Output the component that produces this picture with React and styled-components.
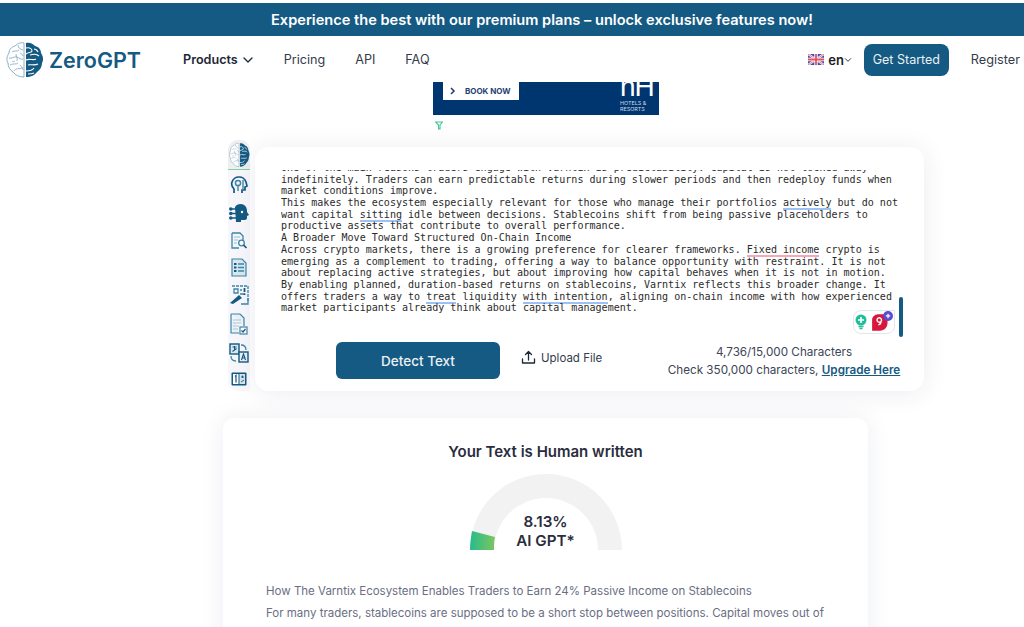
import React from 'react'
import styled, { createGlobalStyle } from 'styled-components'

const Global = createGlobalStyle`
  html, body {
    margin: 0;
    padding: 0;
    height: 627px;
    overflow: hidden;
    background: #fff;
    font-family: Inter, "Liberation Sans", sans-serif;
  }
  * { box-sizing: border-box; }
`

const Page = styled.div`
  width: 1024px;
  height: 627px;
  overflow: hidden;
  background: #fff;
  padding-top: 3px;
`

const Banner = styled.div`
  height: 33px;
  padding-left: 60px;
  background: #155a82;
  color: #fff;
  font-size: 14.6px;
  font-weight: 600;
  display: flex;
  align-items: center;
  justify-content: center;
`

const Header = styled.header`
  height: 45px;
  margin-top: 1px;
  display: flex;
  align-items: center;
  padding: 0 4px 0 6px;
`

const LogoText = styled.span`
  font-size: 21.5px;
  font-weight: 600;
  color: #155a82;
  margin-left: 5px;
`

const Nav = styled.nav`
  display: flex;
  align-items: center;
  margin-left: 42px;
  flex: 1;
`

const NavItem = styled.a`
  display: flex;
  align-items: center;
  gap: 4px;
  font-size: 12.6px;
  font-weight: ${p => (p.$bold ? 600 : 400)};
  color: ${p => (p.$bold ? '#1d2738' : '#333b4a')};
  margin-right: ${p => p.$gap}px;
`

const Lang = styled.div`
  display: flex;
  align-items: center;
  font-size: 13px;
  font-weight: 600;
  color: #1c1c24;
  gap: 4px;
`

const GetStarted = styled.button`
  width: 85px;
  height: 32px;
  margin-left: 12px;
  border: 0;
  border-radius: 8px;
  background: #155a82;
  color: #e9f1f5;
  font: 400 12.5px Inter, sans-serif;
`

const Register = styled.a`
  margin-left: 22px;
  font-size: 12.7px;
  color: #333b4a;
`

const Ad = styled.div`
  width: 226px;
  height: 33px;
  margin-left: 433px;
  background: #003670;
  display: flex;
  justify-content: space-between;
  overflow: hidden;
`

const BookNow = styled.div`
  width: 76px;
  height: 18px;
  margin-left: 10px;
  background: #fff;
  color: #1f3f75;
  font-size: 8px;
  font-weight: 700;
  display: flex;
  align-items: center;
  gap: 9px;
  padding-left: 7px;
`

const Brand = styled.div`
  width: 39px;
  color: #fff;
  display: flex;
  flex-direction: column;
`

const BrandMark = styled.div`
  height: 20px;
  margin-top: -5px;
  font: 400 28px/20px "Liberation Sans", sans-serif;
  letter-spacing: -1px;
`

const BrandSub = styled.div`
  margin-top: 3px;
  font-size: 5.4px;
  line-height: 6px;
  color: #cfd9e6;
`

const AdMark = styled.div`
  height: 32px;
  margin-left: 435px;
  padding-top: 6px;
  display: flex;
  align-items: flex-start;
`

const ToolRow = styled.section`
  display: flex;
  align-items: flex-start;
  margin-left: 228px;
  width: 696px;
`

const Side = styled.aside`
  width: 22px;
  height: 251px;
  margin-top: -7px;
  margin-right: 5px;
  background: #f7f7fb;
  border-radius: 10px 10px 0 10px;
  display: flex;
  flex-direction: column;
  align-items: center;
`

const SideItem = styled.div`
  flex: none;
  width: 22px;
  height: ${p => p.$h}px;
  display: flex;
  align-items: center;
  justify-content: center;
  ${p => p.$active && 'background: #efeff2; border-radius: 10px 10px 0 0; border-bottom: 1px solid #7fd49a;'}
`

const Card = styled.div`
  position: relative;
  width: 669px;
  height: 244px;
  background: #fff;
  border-radius: 14px;
  box-shadow: 0 2px 26px rgba(30, 40, 90, 0.09);
  padding: 23px 0 0 26px;
`

const TextBox = styled.div`
  height: 146px;
  overflow: hidden;
`

const Pre = styled.div`
  margin-top: -8px;
  font: 400 10.05px/11.69px "DejaVu Sans Mono", "Liberation Mono", monospace;
  color: #2b2b2b;
  white-space: pre;
`

const Flag = styled.span`
  border-bottom: 2px solid ${p => (p.$red ? '#f7a6b6' : '#9dc0f7')};
`

const ScrollThumb = styled.div`
  position: absolute;
  left: 644px;
  top: 150px;
  width: 4px;
  height: 40px;
  border-radius: 2px;
  background: #155a82;
`

const Widget = styled.div`
  position: absolute;
  left: 598px;
  top: 163px;
  width: 42px;
  height: 24px;
  background: #fff;
  border: 1px solid #e4e6ec;
  border-radius: 8px 0 8px 8px;
  display: flex;
  align-items: center;
  justify-content: center;
  gap: 4px;
`

const CardFoot = styled.div`
  display: flex;
  align-items: flex-start;
  margin-top: 26px;
  padding: 0 20px 0 55px;
`

const Detect = styled.button`
  width: 164px;
  height: 37px;
  border: 0;
  border-radius: 6px;
  background: #155a82;
  color: #e9f1f5;
  font: 500 13.5px Inter, sans-serif;
`

const Upload = styled.a`
  display: flex;
  align-items: center;
  gap: 5px;
  margin-left: 21px;
  margin-top: 8px;
  font-size: 11.5px;
  color: #333b4a;
`

const Counts = styled.div`
  width: 240px;
  margin: 1px 0 0 auto;
  text-align: center;
  font-size: 11.7px;
  line-height: 18px;
  color: #3d4556;
  white-space: nowrap;
`

const Upgrade = styled.a`
  color: #155a82;
  font-weight: 600;
  text-decoration: underline;
`

const Result = styled.section`
  width: 645px;
  height: 300px;
  margin: 27px 0 0 223px;
  background: #fff;
  border-radius: 12px;
  box-shadow: 0 0 24px rgba(30, 40, 90, 0.08);
  padding-top: 25px;
`

const ResultTitle = styled.h2`
  margin: 0;
  text-align: center;
  font-size: 15px;
  line-height: 18px;
  font-weight: 600;
  color: #2a2d3e;
`

const Gauge = styled.div`
  position: relative;
  width: 152px;
  height: 76px;
  margin: 13px auto 0;
`

const GaugeText = styled.div`
  position: absolute;
  left: 0;
  right: 0;
  top: 38px;
  text-align: center;
  font-size: 15.2px;
  line-height: 19px;
  font-weight: 600;
  color: #2a2d3e;
`

const Body = styled.div`
  margin: 30px 0 0 43px;
  font-size: 11.5px;
  line-height: 22px;
  color: #6a6e84;
`

const BrainIcon = ({ width = 38, height = 38 }) => (
  <svg width={width} height={height} viewBox="0 0 38 38" fill="none" preserveAspectRatio="none">
    <path d="M18 2C14 1 11 3 9 5 5 6 3 9 3 12 1 15 0 19 2 22c0 4 2 7 5 9 2 3 6 5 11 5V2z" fill="#fff" stroke="#8eb0c6" strokeWidth="1" />
    <path d="M6 11c3-2 5 0 7-2M3 17c3 1 5-2 8-1s3 3 6 2M4 24c3-2 6 0 8-2M8 30c2-3 5-2 9-3M12 4c0 3 2 4 5 5M10 13c0 3 2 4 1 7M14 24c1 2 3 2 3 5M14 12c1 1 3 1 3 3M6 20c1 1 2 1 3 0" stroke="#8eb0c6" strokeWidth="0.9" />
    <path d="M20 2c4-1 7 1 9 3 4 1 6 4 6 7 2 3 3 7 1 10 0 4-2 7-5 9-2 3-6 5-11 5V2z" fill="#155a82" />
    <path d="M20 7c4-1 6 1 6 3s-4 1-6 3M24 14c3-1 7-1 9 1M20 19c4-2 7 1 10-1M22 24c3-1 6 1 10-1M20 30c3 0 6 0 8-3M28 8c2 0 3 1 4 3M22 33c2 0 4 0 6-1" stroke="#fff" strokeWidth="1.1" />
  </svg>
)

const Chevron = ({ size = 12, color = '#333' }) => (
  <svg width={size} height={size} viewBox="0 0 12 12" fill="none">
    <path d="M2 4l4 4 4-4" stroke={color} strokeWidth="1.3" strokeLinecap="round" strokeLinejoin="round" />
  </svg>
)

const UkFlag = () => (
  <svg width="16" height="11" viewBox="0 0 16 11">
    <rect width="16" height="11" rx="1.5" fill="#3d50a5" />
    <path d="M0 0l16 11M16 0L0 11" stroke="#fff" strokeWidth="2.2" />
    <path d="M0 0l16 11M16 0L0 11" stroke="#e0506a" strokeWidth="0.8" />
    <path d="M8 0v11M0 5.5h16" stroke="#fff" strokeWidth="3.4" />
    <path d="M8 0v11M0 5.5h16" stroke="#e0506a" strokeWidth="1.8" />
  </svg>
)

const teal = '#3f86a8'

const HeadGear = () => (
  <svg width="18" height="18" viewBox="0 0 18 18" fill="none">
    <path d="M4 17v-4C2 11 1 9 2 6c1-3 4-5 7-5 4 0 6 2 7 5l1 4-2 1v3h-3v3" stroke="#155a82" strokeWidth="1.7" />
    <circle cx="8" cy="7" r="2.6" stroke={teal} strokeWidth="1.5" />
    <path d="M13 4v9M8 10v5" stroke={teal} strokeWidth="1.4" />
  </svg>
)

const HeadSolid = () => (
  <svg width="20" height="20" viewBox="0 0 20 20">
    <path d="M6 4C8 0 15 0 17 4c1 2 1 3 1 5l2 3-2 1v2c0 2-2 2-4 2h-2v2H7z" fill="#155a82" />
    <path d="M1 6h7M1 10.5h7M1 15h7" stroke="#155a82" strokeWidth="1.7" />
    <circle cx="1.8" cy="6" r="1.8" fill="#155a82" />
    <circle cx="1.8" cy="10.5" r="1.8" fill="#155a82" />
    <circle cx="1.8" cy="15" r="1.8" fill="#155a82" />
    <circle cx="13" cy="9" r="1.2" fill="#fff" />
  </svg>
)

const DocSearch = () => (
  <svg width="18" height="18" viewBox="0 0 18 18" fill="none">
    <path d="M2 1h8l3 3v4M2 1v15h7" stroke={teal} strokeWidth="1.3" fill="#f1f6f9" />
    <path d="M4 5h6M4 8h4M4 11h3" stroke="#9cc0d2" strokeWidth="1.2" />
    <circle cx="11.5" cy="11" r="2.8" stroke={teal} strokeWidth="1.3" fill="#fff" />
    <path d="M13.5 13l3 3" stroke="#155a82" strokeWidth="1.7" />
  </svg>
)

const DocList = () => (
  <svg width="16" height="19" viewBox="0 0 16 19" fill="none">
    <path d="M1 1h10l4 4v13H1z" stroke={teal} strokeWidth="1.2" fill="#d9e8ef" />
    <path d="M3 6h2.5M3 9.5h2.5M3 13h2.5" stroke="#155a82" strokeWidth="1.8" />
    <path d="M7 6h6M7 9.5h6M7 13h6" stroke={teal} strokeWidth="1.3" />
  </svg>
)

const GridPencil = () => (
  <svg width="20" height="20" viewBox="0 0 20 20" fill="none">
    <path d="M3 1h16v15" stroke={teal} strokeWidth="1.3" strokeDasharray="3 1" />
    <path d="M5 4h4v4H5zM11 9h5M11 5h2" stroke={teal} strokeWidth="1.3" />
    <path d="M15.5 3v4M15.5 8.5V10" stroke="#155a82" strokeWidth="1.8" />
    <path d="M1 18l9-8 3 3-9 6z" fill="#155a82" />
    <path d="M19 13v6h-7" stroke={teal} strokeWidth="1.3" />
  </svg>
)

const DocCheck = () => (
  <svg width="18" height="22" viewBox="0 0 18 22" fill="none">
    <path d="M1 1h9l4 4v8M1 1v19h8" stroke={teal} strokeWidth="1.2" fill="#e9f2f6" />
    <path d="M3 7h8M3 10h8M3 13h6M3 16h5" stroke="#a9c7d6" strokeWidth="1.2" />
    <rect x="10" y="14" width="7" height="7" stroke={teal} strokeWidth="1.2" fill="#fff" />
    <path d="M11.5 17.5l1.5 1.5 2.5-3" stroke="#155a82" strokeWidth="1.2" />
  </svg>
)

const Translate = () => (
  <svg width="20" height="20" viewBox="0 0 20 20" fill="none">
    <rect x="1" y="1" width="9" height="10" stroke="#155a82" strokeWidth="1.4" fill="#d9e8ef" />
    <path d="M3.5 4h4M5.5 3v4M3.5 8.5l4-3" stroke="#155a82" strokeWidth="1.1" />
    <rect x="10" y="9" width="9" height="10" stroke="#155a82" strokeWidth="1.4" fill="#e8f1f5" />
    <path d="M12.5 17l2-6 2 6M13.2 15h2.6" stroke="#155a82" strokeWidth="1.1" />
    <path d="M12 2c3 0 5 1 5 5M2 13c0 3 2 5 5 5" stroke={teal} strokeWidth="1.3" />
  </svg>
)

const BookNum = () => (
  <svg width="16" height="14" viewBox="0 0 16 14" fill="none">
    <rect x="0.5" y="0.5" width="15" height="13" rx="1" fill="#155a82" />
    <rect x="2" y="2" width="5.5" height="10" fill="#fff" />
    <rect x="8.5" y="2" width="5.5" height="10" fill="#d6e5ec" />
    <path d="M4 4.5l1-1v7" stroke="#155a82" strokeWidth="1.2" />
    <path d="M10 5h3M11.5 3.5V6M10 10l3-2" stroke="#155a82" strokeWidth="0.9" />
  </svg>
)

const sideItems = [
  { key: 'brain', h: 30, icon: <BrainIcon width={21} height={26} />, active: true },
  { key: 'head', h: 29, icon: <HeadGear /> },
  { key: 'solid', h: 28, icon: <HeadSolid /> },
  { key: 'search', h: 27, icon: <DocSearch /> },
  { key: 'list', h: 27, icon: <DocList /> },
  { key: 'grid', h: 28, icon: <GridPencil /> },
  { key: 'check', h: 30, icon: <DocCheck /> },
  { key: 'translate', h: 28, icon: <Translate /> },
  { key: 'book', h: 24, icon: <BookNum /> },
]

function App() {
  return (
    <Page>
      <Global />
      <Banner>Experience the best with our premium plans – unlock exclusive features now!</Banner>
      <Header>
        <BrainIcon />
        <LogoText>ZeroGPT</LogoText>
        <Nav>
          <NavItem $bold $gap={30}>Products <Chevron size={12} color="#1d2738" /></NavItem>
          <NavItem $gap={30}>Pricing</NavItem>
          <NavItem $gap={30}>API</NavItem>
          <NavItem $gap={0}>FAQ</NavItem>
        </Nav>
        <Lang>
          <UkFlag />
          <span>en</span>
        </Lang>
        <Chevron size={8} color="#1c1c24" />
        <GetStarted>Get Started</GetStarted>
        <Register>Register</Register>
      </Header>

      <Ad>
        <BookNow>
          <svg width="6" height="8" viewBox="0 0 6 8" fill="none">
            <path d="M1 1l3 3-3 3" stroke="#1f3f75" strokeWidth="1.5" />
          </svg>
          BOOK NOW
        </BookNow>
        <Brand>
          <BrandMark>nH</BrandMark>
          <BrandSub>HOTELS &amp;<br />RESORTS</BrandSub>
        </Brand>
      </Ad>
      <AdMark>
        <svg width="8" height="9" viewBox="0 0 8 9" fill="none">
          <path d="M0.5 1h7L5 4v4H3.5V4z" stroke="#3fc79a" strokeWidth="1.1" />
        </svg>
      </AdMark>

      <ToolRow>
        <Side>
          {sideItems.map(item => (
            <SideItem key={item.key} $h={item.h} $active={item.active}>{item.icon}</SideItem>
          ))}
        </Side>
        <Card>
          <TextBox>
            <Pre>
              {'One of the main reasons traders engage with Varntix is predictability. Capital is not locked away\n'}
              {'indefinitely. Traders can earn predictable returns during slower periods and then redeploy funds when\n'}
              {'market conditions improve.\n'}
              {'This makes the ecosystem especially relevant for those who manage their portfolios '}<Flag>actively</Flag>{' but do not\n'}
              {'want capital '}<Flag>sitting</Flag>{' idle between decisions. Stablecoins shift from being passive placeholders to\n'}
              {'productive assets that contribute to overall performance.\n'}
              {'A Broader Move Toward Structured On-Chain Income\n'}
              {'Across crypto markets, there is a growing preference for clearer frameworks. '}<Flag $red>Fixed income</Flag>{' crypto is\n'}
              {'emerging as a complement to trading, offering a way to balance opportunity with restraint. It is not\n'}
              {'about replacing active strategies, but about improving how capital behaves when it is not in motion.\n'}
              {'By enabling planned, duration-based returns on stablecoins, Varntix reflects this broader change. It\n'}
              {'offers traders a way to '}<Flag>treat</Flag>{' liquidity '}<Flag>with intention</Flag>{', aligning on-chain income with how experienced\n'}
              {'market participants already think about capital management.'}
            </Pre>
          </TextBox>
          <ScrollThumb />
          <Widget>
            <svg width="12" height="16" viewBox="0 0 12 16">
              <circle cx="6" cy="6" r="5.5" fill="#1fbf9c" />
              <path d="M3.5 12.5h5M4.5 14.5h3" stroke="#1fbf9c" strokeWidth="1.3" />
              <path d="M6 3v6M3 6h6" stroke="#fff" strokeWidth="1.6" />
            </svg>
            <svg width="22" height="22" viewBox="0 0 20 20">
              <path d="M1 8c0-3 3-5 6-5h8v8c0 4-3 7-7 7H1z" fill="#d8173c" />
              <path d="M9.5 8a2 2 0 1 0-.4 1.4c0 2-1 3-2.4 3.2M9.5 8v1" stroke="#fff" strokeWidth="1.3" fill="none" />
              <circle cx="15.5" cy="4.5" r="4.5" fill="#5a4bd0" />
              <path d="M15.5 2.5v4M13.5 4.5h4" stroke="#fff" strokeWidth="1.1" />
            </svg>
          </Widget>
          <CardFoot>
            <Detect>Detect Text</Detect>
            <Upload>
              <svg width="15" height="15" viewBox="0 0 15 15" fill="none">
                <path d="M7.5 10V1.5M4.5 4.5l3-3 3 3M1.5 9v4h12V9" stroke="#1d2738" strokeWidth="1.3" strokeLinecap="round" strokeLinejoin="round" />
              </svg>
              Upload File
            </Upload>
            <Counts>
              4,736/15,000 Characters<br />
              Check 350,000 characters, <Upgrade>Upgrade Here</Upgrade>
            </Counts>
          </CardFoot>
        </Card>
      </ToolRow>

      <Result>
        <ResultTitle>Your Text is Human written</ResultTitle>
        <Gauge>
          <svg width="152" height="76" viewBox="0 0 152 76">
            <defs>
              <linearGradient id="gaugeFill" x1="0" x2="1" y1="0" y2="0">
                <stop offset="0" stopColor="#27bb8e" />
                <stop offset="1" stopColor="#7cc65f" />
              </linearGradient>
            </defs>
            <path d="M0 76A76 76 0 0 1 152 76H128A52 52 0 0 0 24 76z" fill="#f2f2f2" />
            <path d="M0 76C0 69 1 63 2 57L25 63C24 67 24 71 24 76z" fill="url(#gaugeFill)" />
          </svg>
          <GaugeText>8.13%<br />AI GPT*</GaugeText>
        </Gauge>
        <Body>
          How The Varntix Ecosystem Enables Traders to Earn 24% Passive Income on Stablecoins<br />
          For many traders, stablecoins are supposed to be a short stop between positions. Capital moves out of
        </Body>
      </Result>
    </Page>
  )
}

export default App
